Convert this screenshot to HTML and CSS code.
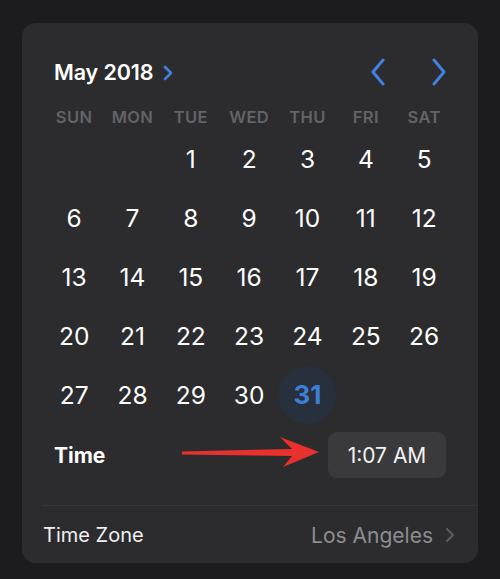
FILE: index.html
```html
<!DOCTYPE html>
<html lang="en">
<head>
<meta charset="utf-8">
<link rel="stylesheet" href="styles.css">
</head>
<body>
<div class="card">
  <div class="header">
    <div class="month">
      <span class="month-label">May 2018</span>
      <svg class="month-chev" width="12" height="16" viewBox="0 0 12 16"><path d="M3 2 L9 8 L3 14" fill="none" stroke="#3d82e0" stroke-width="2.6" stroke-linecap="round" stroke-linejoin="round"/></svg>
    </div>
    <div class="nav">
      <svg class="nav-btn" width="18" height="28" viewBox="0 0 18 28"><path d="M14 2 L4 14 L14 26" fill="none" stroke="#3d82e0" stroke-width="3" stroke-linecap="round" stroke-linejoin="round"/></svg>
      <svg class="nav-btn" width="18" height="28" viewBox="0 0 18 28"><path d="M4 2 L14 14 L4 26" fill="none" stroke="#3d82e0" stroke-width="3" stroke-linecap="round" stroke-linejoin="round"/></svg>
    </div>
  </div>
  <div class="weekdays">
    <span>SUN</span><span>MON</span><span>TUE</span><span>WED</span><span>THU</span><span>FRI</span><span>SAT</span>
  </div>
  <div class="days">
    <span></span><span></span><span>1</span><span>2</span><span>3</span><span>4</span><span>5</span>
    <span>6</span><span>7</span><span>8</span><span>9</span><span>10</span><span>11</span><span>12</span>
    <span>13</span><span>14</span><span>15</span><span>16</span><span>17</span><span>18</span><span>19</span>
    <span>20</span><span>21</span><span>22</span><span>23</span><span>24</span><span>25</span><span>26</span>
    <span>27</span><span>28</span><span>29</span><span>30</span><span class="selected"><b>31</b></span><span></span><span></span>
  </div>
  <div class="time-row">
    <span class="time-label">Time</span>
    <span class="time-btn">1:07 AM</span>
    <svg class="arrow" width="150" height="45" viewBox="175 430 150 45"><polygon points="182,451.5 292,449 280,437 319,452 283,467 292,456 182,454.5" fill="#e8302c"/></svg>
  </div>
  <div class="sep"></div>
  <div class="tz-row">
    <span class="tz-label">Time Zone</span>
    <span class="tz-value">Los Angeles
      <svg class="tz-chev" width="10" height="16" viewBox="0 0 10 16"><path d="M2 2 L8 8 L2 14" fill="none" stroke="#5c5c60" stroke-width="2.2" stroke-linecap="round" stroke-linejoin="round"/></svg>
    </span>
  </div>
</div>
</body>
</html>
```

FILE: styles.css
```css
html, body {
  margin: 0;
  padding: 0;
  background: #1c1c1e;
  font-family: Inter, "Noto Sans", "DejaVu Sans", sans-serif;
  color: #fff;
}
body {
  padding: 23px 22px 16px 22px;
}
.card {
  position: relative;
  width: 456px;
  height: 540px;
  background: #2c2c2e;
  border-radius: 14px;
  padding-top: 29px;
  box-sizing: border-box;
}
.header {
  height: 40px;
  display: flex;
  align-items: center;
  justify-content: space-between;
  padding: 0 30px 0 32px;
}
.month {
  display: flex;
  align-items: center;
  gap: 8px;
}
.month-label {
  font-size: 21.5px;
  font-weight: 600;
  letter-spacing: -0.1px;
}
.month-chev {
  margin-top: 1px;
}
.nav {
  display: flex;
  align-items: center;
  gap: 43px;
}
.weekdays {
  margin-top: 13px;
  height: 24px;
  display: grid;
  grid-template-columns: repeat(7, 58.33px);
  padding-left: 23px;
  align-items: center;
}
.weekdays span {
  text-align: center;
  font-size: 16.5px;
  font-weight: 600;
  color: #636366;
  letter-spacing: 0.4px;
}
.days {
  display: grid;
  grid-template-columns: repeat(7, 58.33px);
  grid-auto-rows: 59px;
  padding-left: 23px;
}
.days span {
  display: flex;
  align-items: center;
  justify-content: center;
  font-size: 24.5px;
  font-weight: 400;
  color: #fff;
}
.days .selected b {
  display: flex;
  align-items: center;
  justify-content: center;
  width: 58px;
  height: 58px;
  border-radius: 50%;
  background: #27303c;
  color: #3d7fd8;
  font-weight: 700;
  font-size: 26px;
}
.time-row {
  position: relative;
  margin-top: 8px;
  height: 46px;
  display: flex;
  align-items: center;
  justify-content: space-between;
  padding: 0 32px;
}
.time-label {
  font-size: 21px;
  font-weight: 700;
}
.time-btn {
  width: 118px;
  height: 46px;
  border-radius: 9px;
  background: #3a3a3c;
  display: flex;
  align-items: center;
  justify-content: center;
  font-size: 21px;
  font-weight: 400;
  color: #f2f2f2;
}
.arrow {
  position: absolute;
  left: 153px;
  top: -2px;
}
.sep {
  margin-top: 27px;
  margin-left: 20px;
  height: 1px;
  background: #38383a;
}
.tz-row {
  height: 58px;
  display: flex;
  align-items: center;
  justify-content: space-between;
  padding: 0 23px 0 21px;
}
.tz-label {
  font-size: 20px;
  color: #f0f0f0;
}
.tz-value {
  display: flex;
  align-items: center;
  gap: 12px;
  font-size: 21px;
  color: #8d8d92;
}
```
